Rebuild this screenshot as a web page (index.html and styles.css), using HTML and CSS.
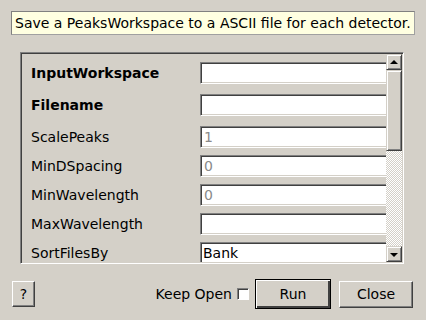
FILE: index.html
```html
<!DOCTYPE html>
<html lang="en">
<head>
  <meta charset="UTF-8" />
  <title>SavePeaks</title>
  <link rel="stylesheet" href="styles.css">
</head>
<body>
  <div class="dialog">
    <div class="desc">Save a PeaksWorkspace to a ASCII file for each detector.</div>

    <div class="frame">
      <div class="rows">
        <div class="row tall">
          <label class="req">InputWorkspace</label>
          <div class="field"></div>
        </div>
        <div class="row tall">
          <label class="req">Filename</label>
          <div class="field"></div>
        </div>
        <div class="row">
          <label>ScalePeaks</label>
          <div class="field dim">1</div>
        </div>
        <div class="row">
          <label>MinDSpacing</label>
          <div class="field dim">0</div>
        </div>
        <div class="row">
          <label>MinWavelength</label>
          <div class="field dim">0</div>
        </div>
        <div class="row">
          <label>MaxWavelength</label>
          <div class="field"></div>
        </div>
        <div class="row">
          <label>SortFilesBy</label>
          <div class="field combo">Bank</div>
        </div>
      </div>
      <div class="scrollbar">
        <div class="sb-btn"><span class="arrow up"></span></div>
        <div class="sb-thumb"></div>
        <div class="sb-track"></div>
        <div class="sb-btn"><span class="arrow down"></span></div>
      </div>
    </div>

    <div class="footer">
      <button class="btn help">?</button>
      <div class="actions">
        <span class="keep">Keep Open</span>
        <span class="check"></span>
        <button class="btn run">Run</button>
        <button class="btn close">Close</button>
      </div>
    </div>
  </div>
</body>
</html>
```

FILE: styles.css
```css
body {
  margin: 0;
  background: #d4d0c8;
  font-family: "DejaVu Sans", sans-serif;
  font-size: 14px;
  color: #000;
}
.dialog {
  width: 426px;
  height: 320px;
  box-sizing: border-box;
  padding: 11px 12px 0 11px;
}
.desc {
  height: 24px;
  line-height: 22px;
  box-sizing: border-box;
  width: 404px;
  padding-left: 3px;
  background: #ffffe1;
  border: 1px solid #a0a0a0;
  border-top-color: #808080;
  border-left-color: #808080;
  white-space: nowrap;
}
.frame {
  margin: 17px 0 0 9px;
  width: 384px;
  height: 212px;
  box-sizing: border-box;
  border: 1px solid;
  border-color: #808080 #fff #fff #808080;
  box-shadow: inset 1px 1px #404040, inset -1px -1px #d4d0c8;
  padding: 1px;
  display: flex;
}
.rows {
  flex: 1;
  min-width: 0;
  overflow: hidden;
  padding-top: 8px;
}
.row {
  display: flex;
  align-items: center;
  height: 22px;
  margin-bottom: 7px;
}
.row.tall {
  margin-bottom: 10px;
}
.row label {
  width: 169px;
  flex: none;
  padding-left: 9px;
}
.row label.req {
  font-weight: bold;
}
.field {
  flex: none;
  width: 230px;
  height: 22px;
  box-sizing: border-box;
  background: #fff;
  border: 1px solid;
  border-color: #808080 #fff #fff #808080;
  box-shadow: inset 1px 1px #404040, inset -1px -1px #d4d0c8;
  padding-left: 3px;
  line-height: 20px;
}
.field.dim {
  color: #8a8a8a;
}
.field.combo {
  padding-left: 2px;
}
.scrollbar {
  width: 16px;
  flex: none;
  display: flex;
  flex-direction: column;
}
.sb-btn, .sb-thumb {
  box-sizing: border-box;
  background: #d4d0c8;
  border: 1px solid;
  border-color: #d4d0c8 #404040 #404040 #d4d0c8;
  box-shadow: inset 1px 1px #fff, inset -1px -1px #808080;
}
.sb-btn {
  height: 16px;
  display: flex;
  align-items: center;
  justify-content: center;
}
.sb-thumb {
  height: 81px;
}
.sb-track {
  flex: 1;
  background: repeating-conic-gradient(#fff 0 25%, #d4d0c8 0 50%) 0 0 / 2px 2px;
}
.arrow {
  width: 0;
  height: 0;
  border-left: 4px solid transparent;
  border-right: 4px solid transparent;
}
.arrow.up {
  border-bottom: 4px solid #000;
  margin-top: -1px;
}
.arrow.down {
  border-top: 4px solid #000;
  margin-top: 1px;
}
.footer {
  margin-top: 15px;
  display: flex;
  justify-content: space-between;
  align-items: center;
  padding-left: 1px;
}
.actions {
  display: flex;
  align-items: center;
}
.btn {
  font: inherit;
  color: #000;
  background: #d4d0c8;
  border: 1px solid;
  border-color: #fff #404040 #404040 #fff;
  box-shadow: inset -1px -1px #808080;
  padding: 0;
  height: 27px;
}
.help {
  width: 23px;
  height: 26px;
}
.keep {
  margin-right: 5px;
}
.check {
  width: 12px;
  height: 12px;
  box-sizing: border-box;
  background: #fff;
  border: 1px solid;
  border-color: #808080 #fff #fff #808080;
  box-shadow: inset 1px 1px #404040;
  margin-right: 6px;
}
.run {
  width: 76px;
  height: 30px;
  border-color: #000;
  box-shadow: inset 1px 1px #fff, inset -2px -2px #404040;
}
.close {
  width: 74px;
  margin-left: 8px;
  margin-right: 1px;
}
```
